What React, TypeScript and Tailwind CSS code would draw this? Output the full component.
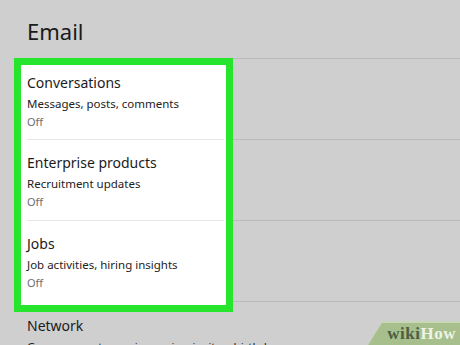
const rows = [
  { title: 'Conversations', subtitle: 'Messages, posts, comments', state: 'Off' },
  { title: 'Enterprise products', subtitle: 'Recruitment updates', state: 'Off' },
  { title: 'Jobs', subtitle: 'Job activities, hiring insights', state: 'Off' },
];

function SettingRow({ title, subtitle, state, className }: { title: string; subtitle: string; state: string; className: string }) {
  return (
    <div className={`pl-[6px] ${className}`}>
      <div className="text-[14px] leading-[20px] text-[#1b1b1b]">{title}</div>
      <div className="mt-[3px] text-[11.5px] leading-4 text-[#222]">{subtitle}</div>
      <div className="mt-[2px] text-[11px] leading-4 text-[#6e6e6e]">{state}</div>
    </div>
  );
}

export default function App() {
  return (
    <div
      className="relative w-[460px] h-[345px] overflow-hidden bg-[#cfcfcf]"
      style={{ fontFamily: '"Noto Sans", "Open Sans", sans-serif' }}
    >
      {/* Section title */}
      <h1 className="pt-[17px] pl-[27px] text-[22px] leading-[28px] text-[#1a1a1a] font-normal">Email</h1>

      {/* Highlighted rows + dimmed remainder */}
      <div className="mt-[13px] flex">
        <div className="ml-[14px] w-[219px] h-[254px] border-[7px] border-[#27e52c] bg-white flex flex-col">
          <SettingRow {...rows[0]} className="h-[74px] pt-[8px]" />
          <div className="ml-[6px] mr-[2px] h-px bg-[#e6e6e6]" />
          <SettingRow {...rows[1]} className="h-[80px] pt-[13px]" />
          <div className="ml-[6px] mr-[2px] h-px bg-[#e6e6e6]" />
          <SettingRow {...rows[2]} className="flex-1 pt-[13px]" />
        </div>
        <div className="flex-1 flex flex-col">
          <div className="h-[81px] border-t border-[#bababa]" />
          <div className="h-[81px] border-t border-[#bababa]" />
          <div className="h-[81px] border-t border-[#bababa]" />
          <div className="flex-1 border-t border-[#bababa]" />
        </div>
      </div>

      {/* Next row, dimmed */}
      <div className="pt-[4px] pl-[27px]">
        <div className="text-[14px] leading-[20px] text-[#1b1b1b]">Network</div>
        <div className="mt-[3px] text-[11.5px] leading-4 text-[#222] whitespace-nowrap">
          Groups, events, anniversaries, invites, birthdays
        </div>
      </div>

      {/* wikiHow watermark */}
      <div className="absolute right-0 bottom-0 w-[92px] h-[24px] bg-[#c9d6b8] [clip-path:polygon(14px_0,100%_0,100%_100%,0_100%)]">
        <div className="absolute inset-0 top-[2px] bg-[#a6bf8c] [clip-path:polygon(14px_0,100%_0,100%_100%,0_100%)] flex items-end justify-end pr-[4px] pb-[1px]">
          <span
            className="text-[17px] leading-[20px] font-bold tracking-[0.5px]"
            style={{ fontFamily: '"Liberation Serif", "DejaVu Serif", serif' }}
          >
            <span className="text-[#4d5e43]">wiki</span>
            <span className="text-[#eef3e6]">How</span>
          </span>
        </div>
      </div>
    </div>
  );
}
